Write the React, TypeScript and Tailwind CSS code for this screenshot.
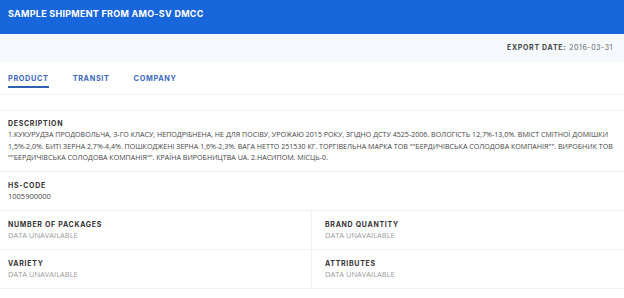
import React from "react";

const desc =
  "1.КУКУРУДЗА ПРОДОВОЛЬЧА, 3-ГО КЛАСУ, НЕПОДРІБНЕНА, НЕ ДЛЯ ПОСІВУ, УРОЖАЮ 2015 РОКУ, ЗГІДНО ДСТУ 4525-2006. ВОЛОГІСТЬ 12,7%-13,0%. ВМІСТ СМІТНОЇ ДОМІШКИ 1,5%-2,0%. БИТІ ЗЕРНА 2,7%-4,4%. ПОШКОДЖЕНІ ЗЕРНА 1,6%-2,3%. ВАГА НЕТТО 251530 КГ. ТОРГІВЕЛЬНА МАРКА ТОВ \"\"БЕРДИЧІВСЬКА СОЛОДОВА КОМПАНІЯ\"\". ВИРОБНИК ТОВ \"\"БЕРДИЧІВСЬКА СОЛОДОВА КОМПАНІЯ\"\". КРАЇНА ВИРОБНИЦТВА UA. 2.НАСИПОМ. МІСЦЬ-0.";

function Label({ children }: { children: React.ReactNode }) {
  return (
    <div className="font-['Inter',sans-serif] text-[7px] leading-[10px] font-bold tracking-[0.1em] text-[#333]">
      {children}
    </div>
  );
}

function Value({ children, muted }: { children: React.ReactNode; muted?: boolean }) {
  return (
    <div
      className={
        "font-['Open_Sans',sans-serif] text-[7.5px] leading-[11px] " +
        (muted ? "text-[#9a9a9a]" : "text-[#444]")
      }
    >
      {children}
    </div>
  );
}

export default function App() {
  return (
    <div className="w-[624px] h-[298px] bg-white overflow-hidden">
      <div className="h-[34px] bg-[#1766db] px-2 pt-[8px]">
        <div className="font-['Inter',sans-serif] text-[9px] leading-[11px] font-bold tracking-[0.03em] text-white">
          SAMPLE SHIPMENT FROM AMO-SV DMCC
        </div>
      </div>
      <div className="h-[28px] bg-[#f5f9fd] flex items-center justify-end pr-[11px]">
        <span className="font-['Inter',sans-serif] text-[7px] font-bold tracking-[0.1em] text-[#444]">
          EXPORT DATE:
        </span>
        <span className="font-['Inter',sans-serif] text-[7px] tracking-[0.08em] text-[#666] ml-[3px]">
          2016-03-31
        </span>
      </div>
      <div className="h-[33px] border-b border-[#eef0f2] flex items-start pt-[12px] px-2 gap-[24px] font-['Inter',sans-serif] text-[7.3px] font-bold tracking-[0.09em] text-[#3b68bd]">
        <div className="flex flex-col items-stretch">
          <span className="leading-[9px]">PRODUCT</span>
          <div className="h-[1.5px] bg-[#2f5fb3] mt-[3px]" />
        </div>
        <span className="leading-[9px]">TRANSIT</span>
        <span className="leading-[9px]">COMPANY</span>
      </div>
      <div className="h-[15px]" />
      <div className="border-t border-[#eef0f2]">
        <div className="px-2 pt-[8px] h-[61px] border-b border-[#eef0f2]">
          <Label>DESCRIPTION</Label>
          <div className="font-['Open_Sans',sans-serif] text-[7.1px] leading-[11.5px] text-[#444]">
            {desc}
          </div>
        </div>
        <div className="px-2 pt-[9px] h-[39px] border-b border-[#eef0f2]">
          <Label>HS-CODE</Label>
          <Value>1005900000</Value>
        </div>
        <div className="grid grid-cols-2">
          <div className="px-2 pt-[9px] h-[39px] border-b border-r border-[#eef0f2]">
            <Label>NUMBER OF PACKAGES</Label>
            <Value muted>DATA UNAVAILABLE</Value>
          </div>
          <div className="pl-[13px] pt-[9px] h-[39px] border-b border-[#eef0f2]">
            <Label>BRAND QUANTITY</Label>
            <Value muted>DATA UNAVAILABLE</Value>
          </div>
          <div className="px-2 pt-[9px] h-[39px] border-b border-r border-[#eef0f2]">
            <Label>VARIETY</Label>
            <Value muted>DATA UNAVAILABLE</Value>
          </div>
          <div className="pl-[13px] pt-[9px] h-[39px] border-b border-[#eef0f2]">
            <Label>ATTRIBUTES</Label>
            <Value muted>DATA UNAVAILABLE</Value>
          </div>
        </div>
      </div>
    </div>
  );
}
